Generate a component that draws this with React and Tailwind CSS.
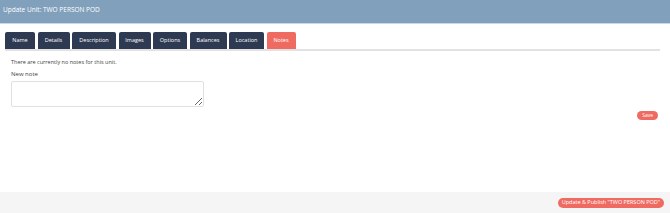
const tabs = ['Name', 'Details', 'Description', 'Images', 'Options', 'Balances', 'Location', 'Notes'];
const widths = ['w-[30px]', 'w-[32px]', 'w-[44px]', 'w-[32px]', 'w-[34px]', 'w-[37px]', 'w-[35px]', 'w-[29px]'];

export default function App() {
  return (
    <div className="flex h-[213px] w-[670px] flex-col bg-white font-['Open_Sans',sans-serif] text-[#333]">
      <div className="flex h-[24px] items-center border-b border-[#c9d8e8] bg-[#81a0bb] pb-[4px] pl-[3px] text-[6.5px] text-white">
        Update Unit: TWO PERSON POD
      </div>

      <div className="flex-1">
        <div className="mt-[8px] mr-[10px] ml-[5px] flex gap-[2.5px] border-b-2 border-[#e2e2e2]">
          {tabs.map((t, i) => (
            <div
              key={t}
              className={`flex h-[17px] ${widths[i]} items-center justify-center rounded-t-[2px] text-[5.5px] text-white ${
                t === 'Notes' ? 'bg-[#ef6b62]' : 'bg-[#2e3a52]'
              }`}
            >
              {t}
            </div>
          ))}
        </div>

        <div className="px-[11px]">
          <p className="mt-[7px] text-[5.5px] text-[#444]">There are currently no notes for this unit.</p>
          <p className="mt-[4px] text-[6px] text-[#444]">New note</p>
          <textarea className="mt-[2px] block h-[26px] w-[193px] rounded-[2px] border border-[#e0e0e0]" />
          <div className="mt-[4px] flex justify-end pr-[1px]">
            <button className="h-[9px] rounded-full bg-[#ef6b62] px-[5px] text-[5px] leading-none text-white">Save</button>
          </div>
        </div>
      </div>

      <div className="flex h-[21px] items-center justify-end bg-[#f5f5f5] pr-[6px]">
        <button className="h-[10px] rounded-full bg-[#ef6b62] px-[4px] text-[5.5px] leading-none text-white">
          Update &amp; Publish "TWO PERSON POD"
        </button>
      </div>
    </div>
  );
}
